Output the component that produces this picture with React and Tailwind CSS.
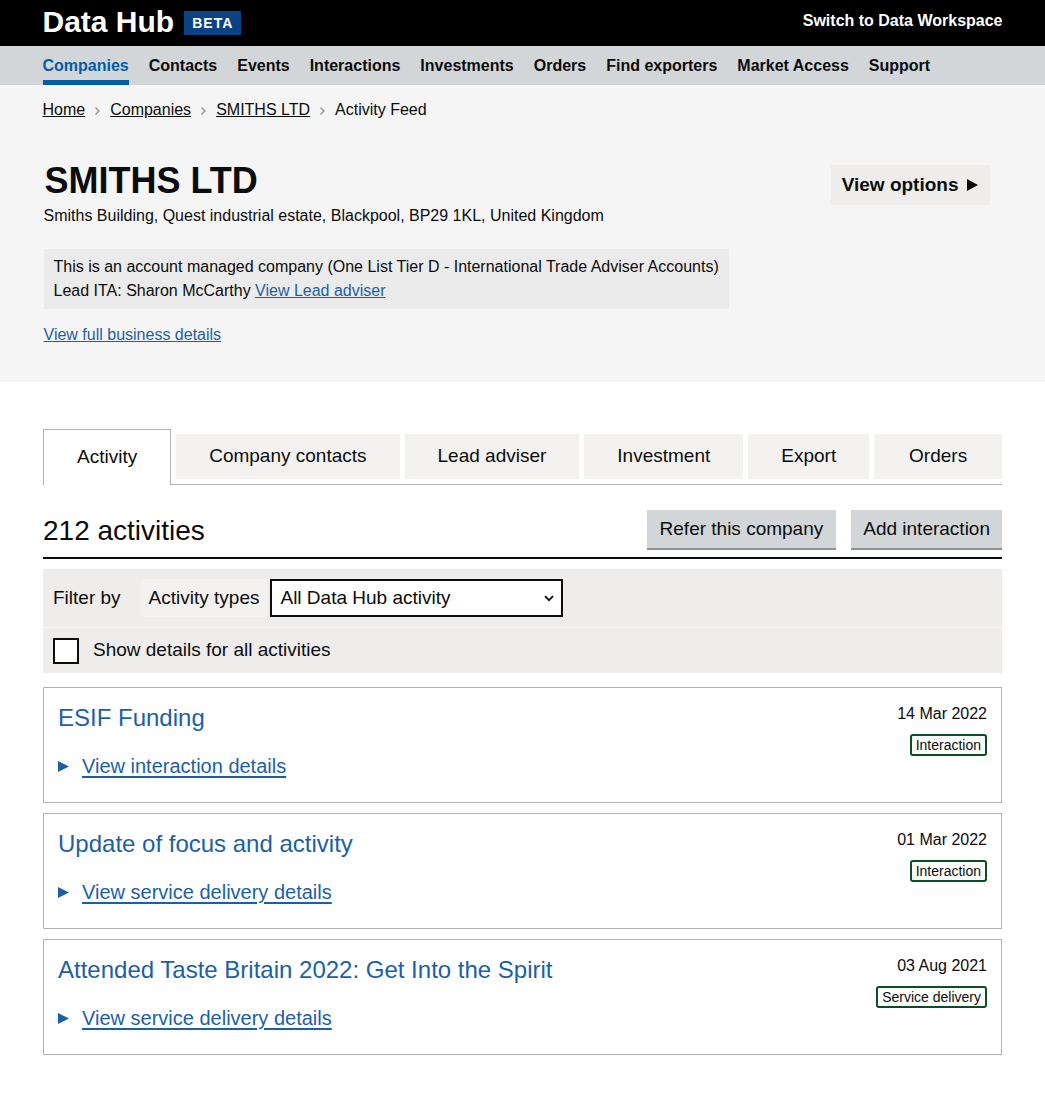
import { useState } from 'react';

const navItems = ['Companies', 'Contacts', 'Events', 'Interactions', 'Investments', 'Orders', 'Find exporters', 'Market Access', 'Support'];
const tabs = ['Activity', 'Company contacts', 'Lead adviser', 'Investment', 'Export', 'Orders'];

const activities = [
    { title: 'ESIF Funding', link: 'View interaction details', date: '14 Mar 2022', tag: 'Interaction' },
    { title: 'Update of focus and activity', link: 'View service delivery details', date: '01 Mar 2022', tag: 'Interaction' },
    { title: 'Attended Taste Britain 2022: Get Into the Spirit', link: 'View service delivery details', date: '03 Aug 2021', tag: 'Service delivery' },
];

function Chevron() {
    return (
        <svg width="7" height="10" viewBox="0 0 7 10" className="mx-[9px] mt-[2px]">
            <path d="M1.5 1.5 L5 5 L1.5 8.5" fill="none" stroke="#8a9094" strokeWidth="1.3" />
        </svg>
    );
}

export default function App() {
    const [showAll, setShowAll] = useState(false);

    return (
        <div className="min-h-[1095px] bg-white text-[#0b0c0c]" style={{ fontFamily: '"Liberation Sans", Arial, sans-serif' }}>
            {/* Header */}
            <header className="bg-black h-[46px]">
                <div className="w-[960px] mx-auto h-full flex items-center justify-between">
                    <div className="flex items-center">
                        <span className="text-white font-bold text-[30px] leading-[30px] -mt-[2px]">Data Hub</span>
                        <span className="ml-[10px] h-[24px] px-[8px] bg-[#0b4283] text-white font-bold text-[14px] leading-[24px] tracking-[1px]">BETA</span>
                    </div>
                    <a className="text-white font-bold text-[16px] -mt-[5px]">Switch to Data Workspace</a>
                </div>
            </header>

            {/* Main nav */}
            <nav className="bg-[#d3d6d9] h-[39px]">
                <ul className="w-[960px] mx-auto flex gap-[20px]">
                    {navItems.map((item, i) => (
                        <li
                            key={item}
                            className={`h-[39px] pt-[10px] text-[16px] leading-[20px] font-bold border-b-[5px] ${i === 0 ? 'text-[#005ea5] border-[#005ea5]' : 'border-transparent'}`}
                        >
                            {item}
                        </li>
                    ))}
                </ul>
            </nav>

            {/* Company summary */}
            <section className="bg-[#f5f5f5] pt-[15px] pb-[37px]">
                <div className="w-[960px] mx-auto">
                    <div className="flex items-center text-[16px] leading-[20px]">
                        <a className="underline">Home</a>
                        <Chevron />
                        <a className="underline">Companies</a>
                        <Chevron />
                        <a className="underline">SMITHS LTD</a>
                        <Chevron />
                        <span>Activity Feed</span>
                    </div>

                    <div className="flex justify-between items-start mt-[41px]">
                        <h1 className="font-bold text-[36px] leading-[40px] pl-[2px]">SMITHS LTD</h1>
                        <button className="mt-[4px] mr-[13px] h-[40px] pl-[11px] pr-[12px] bg-[#eeedeb] flex items-center gap-[8px] font-bold text-[19px]">
                            View options
                            <svg width="11" height="12" viewBox="0 0 11 12"><path d="M0 0 L11 6 L0 12 Z" fill="#0b0c0c" /></svg>
                        </button>
                    </div>
                    <p className="text-[16px] leading-[20px] pl-[1px] mt-[1px]">Smiths Building, Quest industrial estate, Blackpool, BP29 1KL, United Kingdom</p>

                    <div className="mt-[23px] ml-[1px] w-fit whitespace-nowrap bg-[#ebebeb] px-[10px] py-[6px] text-[16px] leading-[24px]">
                        <p>This is an account managed company (One List Tier D - International Trade Adviser Accounts)</p>
                        <p>Lead ITA: Sharon McCarthy <a className="text-[#1d5fa4] underline">View Lead adviser</a></p>
                    </div>

                    <a className="block w-fit mt-[16px] ml-[1px] text-[16px] leading-[20px] text-[#1d5fa4] underline">View full business details</a>
                </div>
            </section>

            {/* Tabs and activity */}
            <main className="w-[959px] ml-[43px] pt-[47px]">
                <ul className="flex items-start gap-[5px] border-b border-[#b1b4b6] h-[56px]">
                    {tabs.map((tab, i) => (
                        i === 0 ? (
                            <li key={tab} className="h-[56px] px-[33px] bg-white border border-b-0 border-[#b1b4b6] text-[19px] flex items-center relative z-10">
                                {tab}
                            </li>
                        ) : (
                            <li key={tab} className={`mt-[5px] h-[45px] px-[33px] bg-[#f3f2f1] text-[19px] flex items-center justify-center ${i === tabs.length - 1 ? 'flex-1' : ''}`}>
                                {tab}
                            </li>
                        )
                    ))}
                </ul>

                <div className="mt-[25px] flex items-end justify-between border-b-2 border-[#0b0c0c] pb-[9px]">
                    <h2 className="text-[28px] leading-[32px] mb-[1px]">212 activities</h2>
                    <div className="flex gap-[15px]">
                        <button className="h-[38px] px-[13px] bg-[#d3d6d9] shadow-[0_2px_0_#929191] text-[19px]">Refer this company</button>
                        <button className="h-[38px] px-[12px] bg-[#d3d6d9] shadow-[0_2px_0_#929191] text-[19px]">Add interaction</button>
                    </div>
                </div>

                {/* Filters */}
                <div className="mt-[10px] bg-[#eeedec]">
                    <div className="h-[58px] flex items-center px-[10px] text-[19px]">
                        <span className="mr-[20px]">Filter by</span>
                        <span className="h-[38px] px-[8px] bg-[#f3f2f1] flex items-center">Activity types</span>
                        <div className="ml-[3px] w-[293px] h-[38px] border-2 border-[#0b0c0c] bg-white flex items-center justify-between pl-[8px] pr-[7px]">
                            <span>All Data Hub activity</span>
                            <svg width="10" height="7" viewBox="0 0 10 7"><path d="M1 1.2 L5 5.2 L9 1.2" fill="none" stroke="#0b0c0c" strokeWidth="1.8" /></svg>
                        </div>
                    </div>
                    <div className="h-px bg-[#f8f8f8]" />
                    <label className="h-[45px] flex items-center px-[10px] text-[19px] cursor-pointer">
                        <span
                            onClick={() => setShowAll(!showAll)}
                            className="w-[26px] h-[26px] border-2 border-[#0b0c0c] bg-white mr-[14px] flex items-center justify-center"
                        >
                            {showAll && <span className="w-[12px] h-[6px] border-l-[3px] border-b-[3px] border-[#0b0c0c] -rotate-45 -mt-[3px]" />}
                        </span>
                        Show details for all activities
                    </label>
                </div>

                {/* Activity list */}
                <ol className="mt-[14px] flex flex-col gap-[10px]">
                    {activities.map((a) => (
                        <li key={a.title} className="border border-[#b1b4b6] pt-[15px] pb-[23px] px-[14px] flex justify-between">
                            <div>
                                <h3 className="text-[24px] leading-[30px] text-[#1d5fa4]">{a.title}</h3>
                                <div className="mt-[21px] flex items-center text-[20px] leading-[25px] text-[#1d5fa4]">
                                    <svg width="11" height="11" viewBox="0 0 11 11" className="mr-[13px]"><path d="M0 0 L11 5.5 L0 11 Z" fill="#1d5fa4" /></svg>
                                    <a className="underline decoration-[2px] underline-offset-[3px]">{a.link}</a>
                                </div>
                            </div>
                            <div className="flex flex-col items-end">
                                <span className="text-[16px] leading-[20px] mt-[1px]">{a.date}</span>
                                <span className="mt-[10px] h-[22px] px-[4px] border-2 border-[#0b4d2a] rounded-[3px] text-[14px] leading-[18px]">{a.tag}</span>
                            </div>
                        </li>
                    ))}
                </ol>
            </main>
        </div>
    );
}
